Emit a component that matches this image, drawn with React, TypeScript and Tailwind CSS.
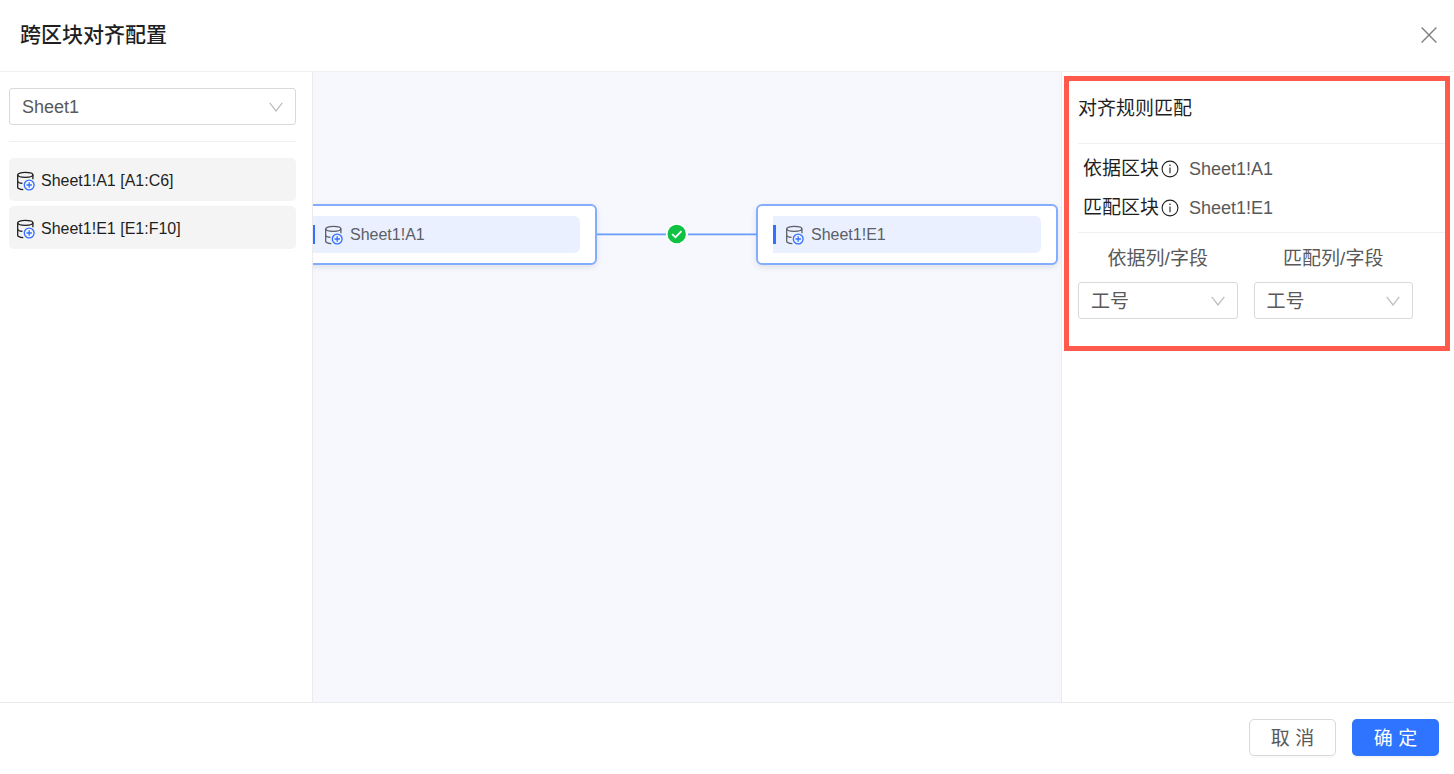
import React, { useState } from "react";
import clsx from "clsx";

const BLOCKS = [
  { name: "Sheet1!A1", range: "A1:C6" },
  { name: "Sheet1!E1", range: "E1:F10" },
];

const RULES = [
  { label: "依据区块", block: "Sheet1!A1" },
  { label: "匹配区块", block: "Sheet1!E1" },
];

const FIELDS = [
  { id: "base-field", label: "依据列/字段", options: ["工号"] },
  { id: "match-field", label: "匹配列/字段", options: ["工号"] },
];

function BlockIcon() {
  return (
    <svg viewBox="0 0 19 20" className="h-5 w-[19px] shrink-0" fill="none" strokeWidth={1.3}>
      <g stroke="currentColor">
        <ellipse cx="9.3" cy="3.8" rx="7.6" ry="2.5" />
        <path d="M1.7 3.8v12.4c0 1.2 2.2 2.1 5.6 2.4" />
        <path d="M16.9 3.8v4.4" />
        <path d="M1.7 10.2c0 1.1 1.8 1.9 4.8 2.2" />
      </g>
      <g stroke="#3370ff">
        <circle cx="13.2" cy="14" r="4.9" />
        <path d="M13.2 11.3v5.4M10.5 14h5.4" />
      </g>
    </svg>
  );
}

function InfoIcon() {
  return (
    <svg viewBox="0 0 18 18" className="ml-[2px] size-[18px] shrink-0" fill="none" stroke="#1f1f1f" strokeWidth={1.1}>
      <circle cx="9" cy="9" r="7.9" />
      <path d="M9 7.6v5.6" />
      <circle cx="9" cy="5.2" r="0.8" fill="#1f1f1f" stroke="none" />
    </svg>
  );
}

type SelectProps = { id: string; options: string[]; label?: string; className?: string };

function Select({ id, options, label, className }: SelectProps) {
  const [value, setValue] = useState(options[0]);

  return (
    <div className="relative">
      <select
        id={id}
        aria-label={label}
        value={value}
        onChange={(e) => setValue(e.target.value)}
        className={clsx(
          "block h-[37px] w-full appearance-none rounded-[3px] border border-[#d9d9d9] bg-white pr-9 pl-3 text-[#595959] outline-none focus:border-[#3370ff]",
          className
        )}
      >
        {options.map((option) => (
          <option key={option}>{option}</option>
        ))}
      </select>
      <svg
        viewBox="0 0 14 10"
        className="pointer-events-none absolute top-1/2 right-[13px] h-[10px] w-[14px] -translate-y-1/2"
        fill="none"
        stroke="#bfbfbf"
        strokeWidth={1.3}
      >
        <path d="M0.7 0.8 7 9 13.3 0.8" />
      </svg>
    </div>
  );
}

function FlowNode({ name, className }: { name: string; className: string }) {
  return (
    <div
      className={clsx(
        "absolute top-[132px] w-[302px] rounded-md border-2 border-[#85adff] bg-white px-[15px] py-[10px] shadow-[0_2px_6px_rgba(0,0,0,0.1)]",
        className
      )}
    >
      <div className="flex h-[37px] items-center rounded-r-md bg-[#eaf0ff] text-base text-[#5c5f66]">
        <span className="h-[19px] w-[3px] bg-[#3370ff]" />
        <span className="ml-[9px] flex">
          <BlockIcon />
        </span>
        <span className="ml-[7px]">{name}</span>
      </div>
    </div>
  );
}

export default function App() {
  const [selected, setSelected] = useState<string | null>(null);

  return (
    <div className="flex min-h-screen flex-col bg-white font-['Liberation_Sans','Noto_Sans_CJK_SC',sans-serif] text-[#1f1f1f]">
      <header className="flex h-[72px] items-center justify-between border-b border-[#f0f0f0] px-5 pb-[2px]">
        <h1 className="text-[21px] leading-7 font-medium">跨区块对齐配置</h1>
        <button type="button" aria-label="关闭" className="-mr-1 p-[1px]">
          <svg viewBox="0 0 16 16" className="size-4" fill="none" stroke="#808080" strokeWidth={1.4}>
            <path d="M0.6 0.6 15.4 15.4M15.4 0.6 0.6 15.4" />
          </svg>
        </button>
      </header>

      <main className="flex flex-1">
        <aside className="w-[313px] shrink-0 border-r border-[#ebebeb] pt-4 pr-4 pl-[9px]">
          <Select id="sheet" label="工作表" options={["Sheet1"]} className="text-lg" />
          <ul className="mt-4 flex flex-col gap-[5px] border-t border-[#f0f0f0] pt-4">
            {BLOCKS.map((block) => (
              <li key={block.name}>
                <button
                  type="button"
                  onClick={() => setSelected(block.name)}
                  className={clsx(
                    "flex h-[43px] w-full items-center gap-[6px] rounded-[5px] px-[7px] pt-[2px] text-base hover:bg-[#ebebeb]",
                    selected === block.name ? "bg-[#ebebeb]" : "bg-[#f4f4f4]"
                  )}
                >
                  <BlockIcon />
                  {block.name} [{block.range}]
                </button>
              </li>
            ))}
          </ul>
        </aside>

        <section className="relative flex-1 overflow-hidden bg-[#f6f8fd]">
          <FlowNode name="Sheet1!A1" className="left-[-18px]" />
          <FlowNode name="Sheet1!E1" className="left-[443px]" />
          {/* connector between the two blocks */}
          <svg viewBox="0 0 160 24" className="absolute top-[150px] left-[284px] h-6 w-40">
            <path d="M0 12.3H69M91 12.3H160" stroke="#6a9bff" strokeWidth={1.7} />
            <circle cx="79.7" cy="12" r="10.6" fill="#fff" />
            <circle cx="79.7" cy="12" r="9.2" fill="#0fc243" />
            <path d="M75.1 12.2 78.5 15.2 84.5 9.2" fill="none" stroke="#fff" strokeWidth={1.8} />
          </svg>
        </section>

        <aside className="w-[393px] shrink-0 border-l border-[#ebebeb] pt-1 pr-1 pl-[2px]">
          <div className="border-[5px] border-[#ff5a4c] pb-[27px] pl-[9px]">
            <h2 className="border-b border-[#f0f0f0] pt-[14px] pb-5 text-[19px] leading-7 font-normal">对齐规则匹配</h2>
            <dl className="border-b border-[#f0f0f0] py-[5px] pl-[5px]">
              {RULES.map((rule) => (
                <div key={rule.label} className="flex h-[39px] items-center">
                  <dt className="flex items-center text-[19px] leading-7">
                    {rule.label}
                    <InfoIcon />
                  </dt>
                  <dd className="ml-[10px] text-lg text-[#595959]">{rule.block}</dd>
                </div>
              ))}
            </dl>
            <div className="grid grid-cols-2 gap-4 pr-8">
              {FIELDS.map((field) => (
                <div key={field.id}>
                  <label
                    htmlFor={field.id}
                    className="flex h-[49px] items-center justify-center pt-[3px] text-[19px] text-[#595959]"
                  >
                    {field.label}
                  </label>
                  <Select id={field.id} options={field.options} className="pt-[3px] text-[19px]" />
                </div>
              ))}
            </div>
          </div>
        </aside>
      </main>

      <footer className="flex h-[72px] justify-end gap-4 border-t border-[#ebebeb] px-[15px] pt-4 text-[19px] leading-7">
        <button
          type="button"
          className="h-[37px] w-[87px] rounded-[5px] border border-[#d9d9d9] bg-white pt-[2px] text-[#595959] shadow-[0_2px_0_rgba(0,0,0,0.02)]"
        >
          取 消
        </button>
        <button
          type="button"
          className="h-[37px] w-[87px] rounded-[5px] bg-[#2f74ff] pt-[2px] text-white shadow-[0_2px_0_rgba(0,0,0,0.04)]"
        >
          确 定
        </button>
      </footer>
    </div>
  );
}
